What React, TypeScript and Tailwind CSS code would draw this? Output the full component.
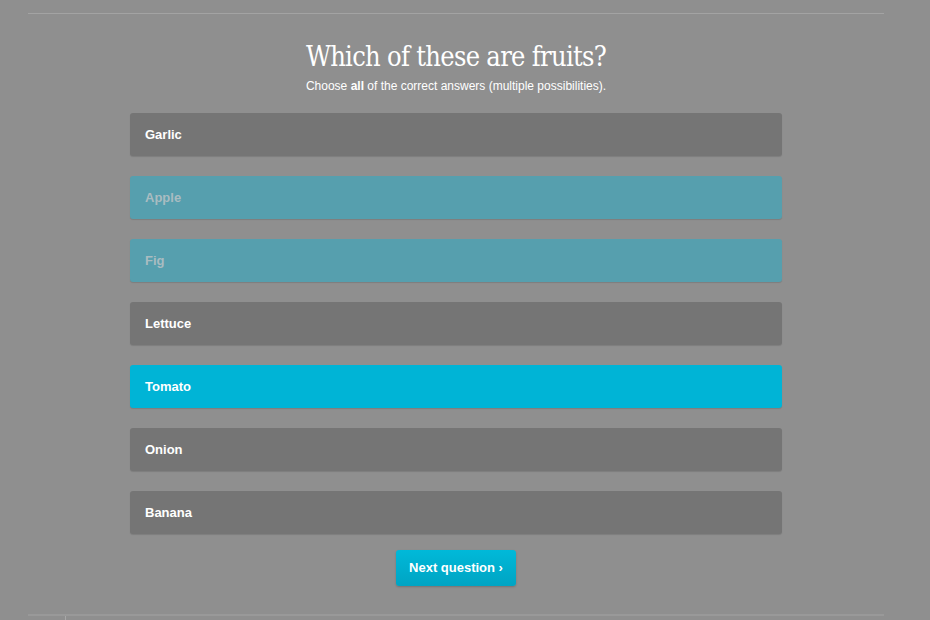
import React from "react";

const options: { label: string; kind: "plain" | "faded" | "active" }[] = [
  { label: "Garlic", kind: "plain" },
  { label: "Apple", kind: "faded" },
  { label: "Fig", kind: "faded" },
  { label: "Lettuce", kind: "plain" },
  { label: "Tomato", kind: "active" },
  { label: "Onion", kind: "plain" },
  { label: "Banana", kind: "plain" },
];

export default function App() {
  return (
    <div className="w-[930px] h-[620px] overflow-hidden bg-[#8f8f8f] font-['Liberation_Sans',Arial,sans-serif]">
      <div className="ml-[28px] w-[856px] pt-[13px]">
        <div className="h-px bg-[#a3a3a3]" />
        <div className="flex flex-col items-center">
          <h1 className="mt-[27px] text-[27px] leading-[32px] text-white font-['DejaVu_Serif',Georgia,serif] tracking-[-0.7px] [font-stretch:condensed]">
            Which of these are fruits?
          </h1>
          <p className="mt-[5px] text-[12px] leading-[16px] text-white">
            Choose <span className="font-bold">all</span> of the correct answers (multiple possibilities).
          </p>
          <div className="mt-[19px] w-[652px] flex flex-col gap-[20px]">
            {options.map((o) => (
              <div
                key={o.label}
                className={
                  o.kind === "plain"
                    ? "h-[43px] rounded-[3px] bg-[#757575] shadow-[0_1px_1px_rgba(0,0,0,0.12)] flex items-center px-[15px] text-[13px] font-bold text-white"
                    : o.kind === "faded"
                    ? "h-[43px] rounded-[3px] bg-[#569fae] shadow-[0_1px_1px_rgba(0,0,0,0.12)] flex items-center px-[15px] text-[13px] font-bold text-[#a9bcc1]"
                    : "h-[43px] rounded-[3px] bg-[#00b4d6] shadow-[0_1px_1px_rgba(0,0,0,0.12)] flex items-center px-[15px] text-[13px] font-bold text-white"
                }
              >
                {o.label}
              </div>
            ))}
          </div>
          <button className="mt-[16px] w-[120px] h-[36px] rounded-[3px] bg-gradient-to-b from-[#00b9d9] to-[#00a4c3] shadow-[0_1px_2px_rgba(0,0,0,0.2)] text-white text-[13px] font-bold">
            Next question ›
          </button>
        </div>
        <div className="mt-[28px] h-[2px] bg-[#999999]" />
        <div className="ml-[37px] w-px h-[6px] bg-[#a8a8a8]" />
      </div>
    </div>
  );
}
